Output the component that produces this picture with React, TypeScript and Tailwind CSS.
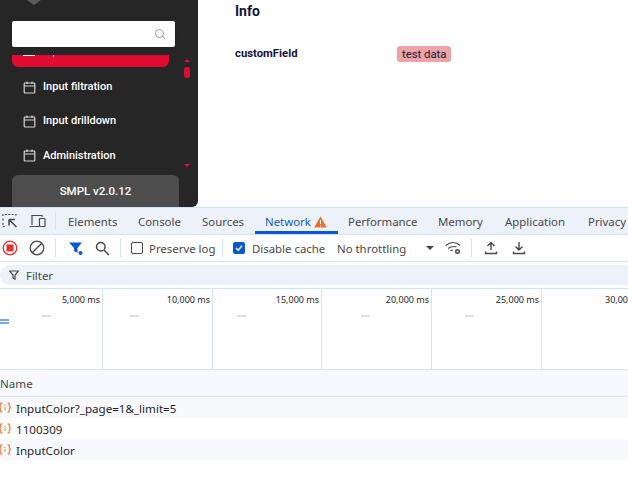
import { Search } from "lucide-react"

const menuItems = ["Input filtration", "Input drilldown", "Administration"]
const tabs = [
  { label: "Elements", width: "w-[70px]" },
  { label: "Console", width: "w-[64px]" },
  { label: "Sources", width: "w-[53px]" },
]
const marks = [
  { label: "5,000 ms", width: "w-[103px]", dash: "ml-[42px]" },
  { label: "10,000 ms", width: "w-[110px]", dash: "ml-[27px]" },
  { label: "15,000 ms", width: "w-[109px]", dash: "ml-[24px]" },
  { label: "20,000 ms", width: "w-[110px]", dash: "ml-[39px]" },
  { label: "25,000 ms", width: "w-[110px]", dash: "ml-[33px]" },
]

function CalendarIcon() {
  return (
    <svg width="13" height="13" viewBox="0 0 13 13" fill="none" stroke="#d4d4d4" strokeWidth="1.2" className="shrink-0">
      <rect x="1.2" y="2" width="10.6" height="10" rx="0.8" />
      <path d="M1.2 5h10.6M4 0.5v2.5M9 0.5v2.5" />
    </svg>
  )
}

function FetchIcon() {
  return (
    <svg width="12" height="11" viewBox="0 0 12 11" fill="none" stroke="#f08a5d" strokeWidth="1.5" className="-ml-[1px] mr-[5px] shrink-0">
      <path d="M3.4 1H2.6Q1.6 1 1.6 2V3.8L0.8 5.5L1.6 7.2V9Q1.6 10 2.6 10H3.4" />
      <path d="M8.6 1H9.4Q10.4 1 10.4 2V3.8L11.2 5.5L10.4 7.2V9Q10.4 10 9.4 10H8.6" />
      <path d="M6 3v.9M6 5.2V8" stroke="#d9a13f" strokeWidth="1.3" />
    </svg>
  )
}

function Divider() {
  return <div className="h-[18px] w-px shrink-0 bg-[#d3e3fd]" />
}

function Sidebar() {
  return (
    <aside className="flex h-[207px] w-[198px] shrink-0 flex-col overflow-hidden rounded-br-[6px] bg-[#262626] font-['Roboto',sans-serif]">
      <div className="ml-[27px] h-0 w-0 shrink-0 border-x-[7px] border-t-[5px] border-x-transparent border-t-[#5c5c5c]" />
      <div className="ml-[12px] mt-[16px] flex h-[26px] w-[163px] shrink-0 items-center justify-end rounded-[2px] bg-white pr-[9px] shadow-sm">
        <Search size={12} strokeWidth={1.6} className="text-[#8a8a8a]" />
      </div>
      <div className="flex h-[128px] shrink-0">
        <div className="w-[181px] pl-[12px]">
          <div className="mt-[8px] flex h-[12px] w-[157px] items-start rounded-b-[6px] bg-[#e00b33] pl-[11px]">
            <span className="h-px w-[12px] bg-[#e8e8e8]" />
            <span className="ml-[18px] h-[2px] w-px bg-white" />
          </div>
          <ul className="mt-[3px] flex flex-col">
            {menuItems.map((item) => (
              <li key={item} className="flex h-[34.4px] items-center gap-[7px] pl-[11px] text-[11px] font-medium text-white">
                <CalendarIcon />
                {item}
              </li>
            ))}
          </ul>
        </div>
        <div className="flex w-[12px] flex-col items-center pt-[12px]">
          <div className="h-0 w-0 border-x-[3px] border-b-[3px] border-x-transparent border-b-[#e00b33]" />
          <div className="mt-[5px] h-[11px] w-[6px] rounded-[3px] bg-[#e00b33]" />
          <div className="mt-[86px] h-0 w-0 border-x-[3px] border-t-[3px] border-x-transparent border-t-[#e00b33]" />
        </div>
      </div>
      <div className="ml-[12px] flex h-[40px] w-[167px] shrink-0 justify-center rounded-t-[6px] bg-[#4d4d4d] pt-[8px] text-[11.5px] font-medium text-white">
        SMPL v2.0.12
      </div>
    </aside>
  )
}

function Info() {
  return (
    <section className="pl-[37px] pt-[2px] font-['Roboto',sans-serif] text-[#14143c]">
      <h2 className="text-[14px] leading-[18px] font-bold">Info</h2>
      <div className="mt-[25px] flex items-center">
        <span className="w-[162px] pt-px text-[11.3px] font-bold">customField</span>
        <span className="rounded-[3px] bg-[#eca4a6] px-[5px] pt-px text-[11.3px] leading-[15px]">test data</span>
      </div>
    </section>
  )
}

function DevtoolsTabs() {
  return (
    <div className="flex h-[28px] items-center border-y border-[#d3e3fd] bg-[#edf2fa] text-[#474747]">
      <svg width="16" height="16" viewBox="0 0 16 16" fill="none" stroke="#474747" strokeWidth="1.2" className="ml-[2px] shrink-0">
        <path d="M1 3V1.5H14V3M1 5.5v2M1 10v3.5H4" strokeDasharray="2 1.4" />
        <path d="M7 6.5h6M7 6.5v6M7 6.5l7.5 7.5" strokeWidth="1.5" />
      </svg>
      <svg width="17" height="14" viewBox="0 0 17 14" fill="none" stroke="#474747" strokeWidth="1.2" className="ml-[11px] mr-[9px] shrink-0">
        <path d="M3 11V1.5H13V3M0.5 12.5H10" />
        <rect x="10.5" y="4.5" width="5.5" height="8" rx="0.8" />
      </svg>
      <Divider />
      <div className="ml-[12px] flex items-center font-['Noto_Sans',sans-serif] text-[11.4px]">
        {tabs.map((tab) => (
          <span key={tab.label} className={`${tab.width} pt-[2px]`}>{tab.label}</span>
        ))}
        <span className="flex h-[26px] w-[83px] items-center gap-[3px] border-b-[3px] border-[#0b57d0] pl-[10px] pt-[5px] text-[#0b57d0]">
          Network
          <svg width="13" height="12" viewBox="0 0 13 12">
            <path d="M6.5 0.5L12.8 11.5H0.2Z" fill="#e8702a" />
            <path d="M6.5 4v4M6.5 9v1.2" stroke="#fff" strokeWidth="1.1" />
          </svg>
        </span>
        <span className="ml-[10px] w-[90px] pt-[2px]">Performance</span>
        <span className="w-[67px] pt-[2px]">Memory</span>
        <span className="w-[83px] pt-[2px]">Application</span>
        <span className="pt-[2px]">Privacy</span>
      </div>
    </div>
  )
}

function DevtoolsToolbar() {
  return (
    <div className="flex h-[27px] items-center border-b border-[#d3e3fd] bg-white font-['Noto_Sans',sans-serif] text-[11.4px] text-[#474747]">
      <svg width="16" height="16" viewBox="0 0 16 16" fill="none" className="ml-[2px] shrink-0">
        <circle cx="8" cy="8" r="6.8" stroke="#dc362e" strokeWidth="1.3" />
        <rect x="4.5" y="4.5" width="7" height="7" fill="#dc362e" />
      </svg>
      <svg width="16" height="16" viewBox="0 0 16 16" fill="none" stroke="#474747" strokeWidth="1.3" className="ml-[11px] mr-[10px] shrink-0">
        <circle cx="8" cy="8" r="6.8" />
        <path d="M3.2 12.8L12.8 3.2" />
      </svg>
      <Divider />
      <svg width="16" height="16" viewBox="0 0 16 16" className="ml-[12px] shrink-0">
        <path d="M1 2.5H14L9.5 8V13L6 11V8Z" fill="#0b57d0" />
        <circle cx="12.5" cy="13" r="2" fill="#0b57d0" />
      </svg>
      <svg width="15" height="15" viewBox="0 0 15 15" fill="none" stroke="#474747" strokeWidth="1.5" className="ml-[11px] mr-[10px] shrink-0">
        <circle cx="5.8" cy="5.8" r="4.3" />
        <path d="M9 9l5 5" />
      </svg>
      <Divider />
      <span className="ml-[10px] h-[12px] w-[12px] shrink-0 rounded-[2px] border border-[#474747]" />
      <span className="ml-[6px] w-[73px] pt-[2px]">Preserve log</span>
      <Divider />
      <span className="ml-[10px] flex h-[12px] w-[12px] shrink-0 items-center justify-center rounded-[2px] bg-[#0b57d0]">
        <svg width="10" height="10" viewBox="0 0 10 10" fill="none" stroke="#fff" strokeWidth="1.4">
          <path d="M2 5l2.2 2.2L8 2.8" />
        </svg>
      </span>
      <span className="ml-[7px] w-[84px] pt-[2px]">Disable cache</span>
      <span className="w-[90px] pl-px pt-[2px]">No throttling</span>
      <span className="h-0 w-0 shrink-0 border-x-[4px] border-t-[4px] border-x-transparent border-t-[#474747]" />
      <svg width="17" height="14" viewBox="0 0 17 14" fill="none" stroke="#474747" strokeWidth="1.2" className="ml-[11px] shrink-0">
        <path d="M0.8 4.5Q8 -1.5 15.2 4.5M3.2 7.5Q7 4.5 11.5 6M5.5 10Q6.5 9 8 9" />
        <circle cx="12.5" cy="10.5" r="1.8" strokeWidth="1.4" />
      </svg>
      <div className="ml-[9px] mr-[12px]"><Divider /></div>
      <svg width="14" height="14" viewBox="0 0 14 14" fill="none" stroke="#474747" strokeWidth="1.4" className="shrink-0">
        <path d="M7 9V1.5M3.5 5L7 1.5L10.5 5M1.5 10.5V12.5H12.5V10.5" />
      </svg>
      <svg width="14" height="14" viewBox="0 0 14 14" fill="none" stroke="#474747" strokeWidth="1.4" className="ml-[14px] shrink-0">
        <path d="M7 1v8M3.5 5.5L7 9L10.5 5.5M1.5 10.5V12.5H12.5V10.5" />
      </svg>
    </div>
  )
}

function FilterBar() {
  return (
    <div className="flex h-[27px] items-center border-b border-[#d3e3fd] bg-white">
      <div className="flex h-[20px] w-full items-center gap-[7px] rounded-l-[10px] bg-[#edf2fa] pl-[9px] font-['Noto_Sans',sans-serif] text-[11.4px] text-[#474747]">
        <svg width="10" height="10" viewBox="0 0 10 10" fill="none" stroke="#474747" strokeWidth="1.2" className="shrink-0">
          <path d="M0.5 1H9.5L6 5V9.2L4 8V5Z" />
        </svg>
        <span className="pt-[2px]">Filter</span>
      </div>
    </div>
  )
}

function Timeline() {
  return (
    <div className="flex h-[81px] overflow-hidden border-b border-[#d3e3fd] bg-white font-['Noto_Sans',sans-serif] text-[9px] leading-[14px] text-[#1f1f1f]">
      {marks.map((mark, i) => (
        <div key={mark.label} className={`${mark.width} shrink-0 border-r border-[#d3e3fd] pt-[4px]`}>
          <div className="pr-[2px] text-right">{mark.label}</div>
          <div className="relative mt-[8px] h-[2px]">
            <div className={`${mark.dash} h-[2px] w-[9px] bg-[#e0e0e0]`} />
            {i === 0 && <div className="absolute left-0 top-[4px] h-[5px] w-[9px] border-y-2 border-[#7aa7f0]" />}
          </div>
        </div>
      ))}
      <div className="shrink-0 whitespace-nowrap pl-[63px] pt-[4px]">30,000 ms</div>
    </div>
  )
}

function Requests() {
  const rows = ["InputColor?_page=1&_limit=5", "1100309", "InputColor"]
  return (
    <div className="font-['Noto_Sans',sans-serif] text-[11.6px] text-[#1f1f1f]">
      <div className="flex h-[27px] items-center border-b border-[#d3e3fd] bg-[#f8f9fd] pt-[2px] text-[#474747]">Name</div>
      {rows.map((row, i) => (
        <div key={row} className={`flex h-[21px] items-center ${i % 2 === 0 ? "bg-[#f8f9fd]" : "bg-white"}`}>
          <FetchIcon />
          <span className="pt-[2px]">{row}</span>
        </div>
      ))}
    </div>
  )
}

export default function App() {
  return (
    <div className="h-[478px] w-[628px] overflow-hidden bg-white">
      <div className="flex h-[207px]">
        <Sidebar />
        <Info />
      </div>
      <DevtoolsTabs />
      <DevtoolsToolbar />
      <FilterBar />
      <Timeline />
      <Requests />
    </div>
  )
}
